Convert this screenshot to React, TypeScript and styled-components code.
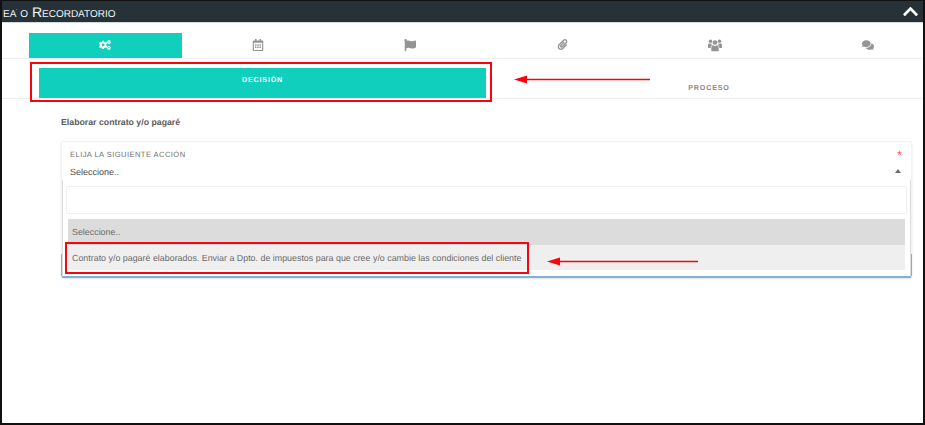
import React from 'react';
import styled, { createGlobalStyle } from 'styled-components';
import { FaCogs, FaRegCalendarAlt, FaFlag, FaPaperclip, FaComments, FaChevronUp } from 'react-icons/fa';

const Global = createGlobalStyle`
  html, body { margin: 0; padding: 0; background: #fff; overflow: hidden; }
  * { box-sizing: border-box; }
  body { text-rendering: geometricPrecision; }
`;

const Frame = styled.div`
  position: relative;
  width: 925px;
  height: 425px;
  overflow: hidden;
  background: #fff;
  border-style: solid;
  border-color: #111;
  border-width: 1px 2px 2px 2px;
  font-family: "Liberation Sans", Arial, sans-serif;
`;

const Header = styled.header`
  position: relative;
  height: 22px;
  background: #263238;
  color: #f2f4f5;
  display: flex;
  align-items: center;
  justify-content: space-between;
  padding: 0 4px 0 1px;
  font-size: 14px;
  font-variant: small-caps;
  border-bottom: 1px solid #d5dadc;
  line-height: 1;
`;

const Speck = styled.span`
  position: absolute;
  left: 14px;
  top: 8px;
  width: 1px;
  height: 1px;
  background: #c9504f;
`;

const ChevronBox = styled.span`
  display: flex;
  color: #fff;
  font-size: 17px;
`;

const IconTabs = styled.nav`
  display: flex;
  margin-top: 10px;
  padding-left: 27px;
  height: 26px;
  width: 1000px;
  border-bottom: 1px solid #eeeeee;
`;

const IconTab = styled.div<{ $active?: boolean; $size?: number }>`
  flex: 0 0 152.5px;
  display: flex;
  align-items: center;
  justify-content: center;
  padding-bottom: 2px;
  font-size: ${p => p.$size ?? 12}px;
  color: ${p => (p.$active ? '#ffffff' : '#949494')};
  background: ${p => (p.$active ? '#10cfbd' : 'transparent')};
`;

const SubTabs = styled.div`
  display: flex;
  height: 40px;
  padding: 9px 0 0 37px;
  width: 921px;
  border-bottom: 1px solid #eeeeee;
`;

const SubTab = styled.div<{ $active?: boolean }>`
  flex: 0 0 ${p => (p.$active ? '447px' : '446px')};
  height: 30px;
  display: flex;
  justify-content: center;
  align-items: ${p => (p.$active ? 'flex-start' : 'flex-end')};
  padding: ${p => (p.$active ? '7px 0 0' : '0 0 5px')};
  font-size: 7.2px;
  line-height: 10px;
  font-weight: 700;
  letter-spacing: 0.8px;
  color: ${p => (p.$active ? '#ffffff' : '#8a8a8a')};
  background: ${p => (p.$active ? '#10cfbd' : 'transparent')};
`;

const Content = styled.main`
  padding: 17px 11px 0 59px;
`;

const Title = styled.h3`
  margin: 0 0 13px;
  font-size: 8.75px;
  line-height: 12px;
  font-weight: 700;
  color: #5c5c5c;
`;

const Field = styled.div`
  position: relative;
  width: 851px;
  height: 137px;
  border: 1px solid #f3f3f3;
  border-bottom: 2px solid #7fb2d6;
  border-radius: 2px;
  padding: 8px 8px 0;
  box-shadow: 0 1px 2px rgba(0, 0, 0, 0.12);
`;

const FieldLabel = styled.label`
  display: block;
  font-size: 7.6px;
  line-height: 10px;
  letter-spacing: 0.42px;
  color: #6f6f6f;
`;

const Required = styled.span`
  position: absolute;
  right: 9px;
  top: 7px;
  font-size: 12px;
  line-height: 12px;
  color: #f55753;
`;

const Value = styled.div`
  margin-top: 6px;
  font-size: 9px;
  line-height: 12px;
  color: #4a4a4a;
`;

const Caret = styled.span`
  position: absolute;
  right: 10px;
  top: 27px;
  width: 0;
  height: 0;
  border-left: 3px solid transparent;
  border-right: 3px solid transparent;
  border-bottom: 4px solid #6a6a6a;
`;

const Dropdown = styled.div`
  position: absolute;
  left: 0;
  right: 0;
  top: 38px;
  bottom: 0;
  background: #fff;
  padding: 6px 3px 8px 3px;
  border-left: 1px solid #dcdcdc;
  border-right: 1px solid #dcdcdc;
`;

const SearchBox = styled.div`
  height: 28px;
  border: 1px solid #f1f1f1;
  border-radius: 2px;
`;

const Options = styled.ul`
  list-style: none;
  margin: 5px 0 0;
  padding: 0 2px 0 2px;
`;

const Option = styled.li<{ $selected?: boolean }>`
  height: ${p => (p.$selected ? '26px' : '25px')};
  padding: 0 4px;
  display: flex;
  align-items: center;
  font-size: 8.9px;
  color: #6a6a6a;
  background: ${p => (p.$selected ? '#dcdcdc' : '#efefef')};
`;

const FocusEdge = styled.span`
  position: absolute;
  left: -1px;
  right: -1px;
  bottom: 0;
  height: 22px;
  border-left: 1px solid #74b4e0;
  border-right: 1px solid #74b4e0;
  pointer-events: none;
`;

const RedBox = styled.div<{ $l: number; $t: number; $w: number; $h: number }>`
  position: absolute;
  left: ${p => p.$l}px;
  top: ${p => p.$t}px;
  width: ${p => p.$w}px;
  height: ${p => p.$h}px;
  border: 2px solid #f5060e;
  pointer-events: none;
`;

const ArrowSvg = styled.svg`
  position: absolute;
  overflow: visible;
  pointer-events: none;
`;

const Arrow = ({ left, top, width }: { left: number; top: number; width: number }) => (
  <ArrowSvg style={{ left, top }} width={width} height={9} viewBox={`0 0 ${width} 9`}>
    <path d={`M12 4.5H${width}`} stroke="#f5060e" strokeWidth="1.4" />
    <path d="M0 4.5L13 0.5V8.5Z" fill="#f5060e" />
  </ArrowSvg>
);

const UsersIcon = () => (
  <svg width="14" height="14" viewBox="0 0 16 16" fill="currentColor" aria-hidden="true">
    <circle cx="8" cy="5.2" r="2.6" />
    <circle cx="2.9" cy="3.6" r="2" />
    <circle cx="13.1" cy="3.6" r="2" />
    <path d="M3.8 15v-3.6C3.8 9.3 5 8.4 6 8.4c.6.4 1.2.6 2 .6s1.400-.2 2-.6c1 0 2.200.9 2.200 3V15z" />
    <path d="M0 10.800V8.200C0 6.800.8 6 1.600 6c.5.4 1 .6 1.500.6.400 0 .7-.1 1-.2-.2 1-.100 1.500.4 2-.8.600-1.500 1.600-1.500 3H1C.4 11.400 0 11.200 0 10.800z" />
    <path d="M16 10.800V8.200C16 6.800 15.200 6 14.400 6c-.5.4-1 .6-1.500.6-.4 0-.7-.1-1-.2.2 1 .1 1.500-.4 2 .8.600 1.500 1.600 1.500 3H15c.6-.0 1-.2 1-.6z" />
  </svg>
);

export default function App() {
  return (
    <Frame>
      <Global />
      <Header>
        <span>ea o Recordatorio</span>
        <Speck />
        <ChevronBox><FaChevronUp /></ChevronBox>
      </Header>
      <IconTabs>
        <IconTab $active><FaCogs /></IconTab>
        <IconTab><FaRegCalendarAlt /></IconTab>
        <IconTab><FaFlag /></IconTab>
        <IconTab $size={11}><FaPaperclip /></IconTab>
        <IconTab><UsersIcon /></IconTab>
        <IconTab><FaComments /></IconTab>
      </IconTabs>
      <SubTabs>
        <SubTab $active>DECISIÓN</SubTab>
        <SubTab>PROCESO</SubTab>
      </SubTabs>
      <Content>
        <Title>Elaborar contrato y/o pagaré</Title>
        <Field>
          <FieldLabel>ELIJA LA SIGUIENTE ACCIÓN</FieldLabel>
          <Required>*</Required>
          <Value>Seleccione..</Value>
          <Caret />
          <Dropdown>
            <SearchBox />
            <Options>
              <Option $selected>Seleccione..</Option>
              <Option>Contrato y/o pagaré elaborados. Enviar a Dpto. de impuestos para que cree y/o cambie las condiciones del cliente</Option>
            </Options>
          </Dropdown>
          <FocusEdge />
        </Field>
      </Content>
      <RedBox $l={28} $t={61} $w={462} $h={40} />
      <RedBox $l={63} $t={241} $w={464} $h={32} />
      <Arrow left={512} top={73.5} width={136} />
      <Arrow left={545} top={255.5} width={151} />
    </Frame>
  );
}
